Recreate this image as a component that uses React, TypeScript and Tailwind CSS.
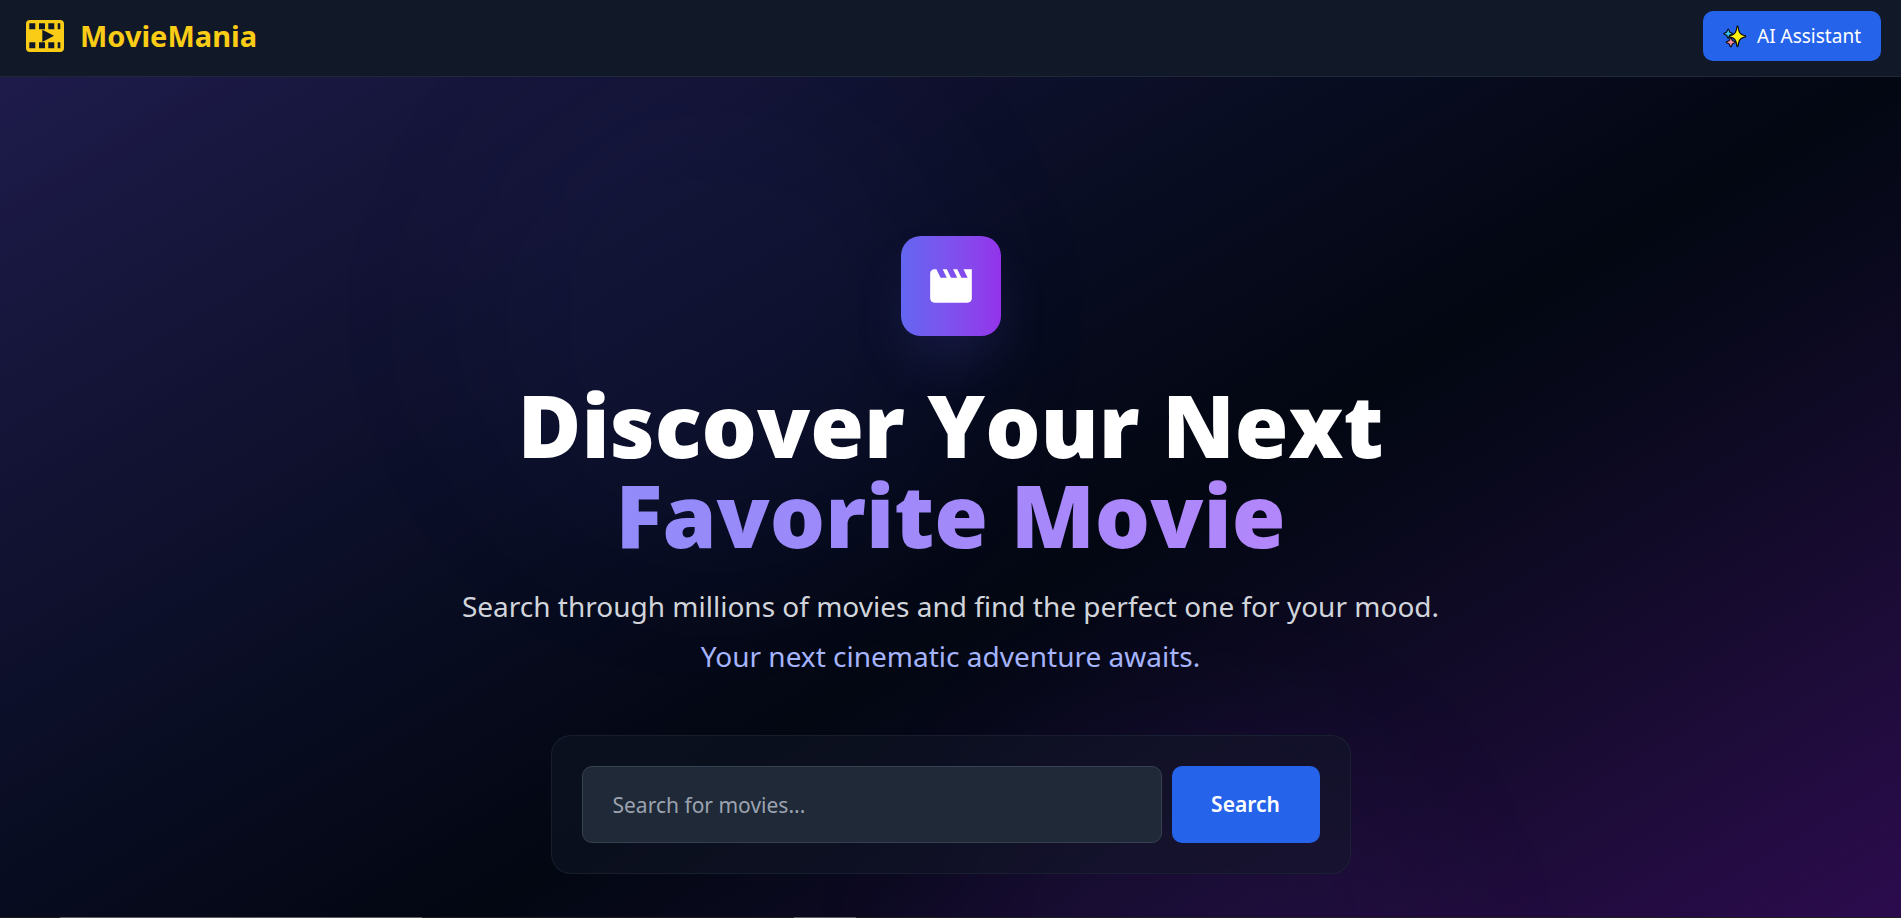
import { MdMovie } from "react-icons/md";

function FilmLogo() {
  return (
    <svg viewBox="0 0 38 32" className="h-8 w-[38px]" aria-hidden="true">
      <path
        fill="#facc15"
        fillRule="evenodd"
        d="M4 0h30a4 4 0 0 1 4 4v24a4 4 0 0 1-4 4H4a4 4 0 0 1-4-4V4a4 4 0 0 1 4-4zM3.300 3.300h6v6h-6zM13 3.300h6v6h-6zM22.300 3.300h6v6h-6zM31.700 3.300h2.600v6h-2.600zM3.300 22.200h6v6h-6zM13 22.200h6v6h-6zM22.300 22.200h6v6h-6zM31.700 22.200h2.600v6h-2.600zM16.300 9.700v12.200l11.700-6.100z"
      />
    </svg>
  );
}

function Sparkles() {
  return (
    <svg viewBox="0 0 24 24" className="size-6" aria-hidden="true" stroke="#0b0b0b" strokeWidth="2.200" strokeLinejoin="round" paintOrder="stroke">
      <path fill="#38c9f5" d="M5.200 5.800l1.100 2.800 2.700 1.100-2.700 1.100-1.100 2.800-1.100-2.800-2.700-1.100 2.700-1.100z" />
      <path fill="#f58ca0" d="M7.800 14.300l1.200 2.800 2.800 1.200-2.800 1.200-1.200 2.800-1.200-2.800-2.800-1.200 2.800-1.200z" />
      <path fill="#fdf010" d="M14.500 2.500c.7 6.300 2.200 8.600 7.800 9.800-5.600 1.200-7.100 3.500-7.800 9.800-.7-6.300-2.200-8.600-7.800-9.800 5.600-1.200 7.100-3.500 7.800-9.800z" />
    </svg>
  );
}

export default function App() {
  return (
    <div className="flex min-h-screen flex-col bg-[#030712] font-['Noto_Sans','Open_Sans',sans-serif] text-white">
      <header className="flex h-[77px] items-center justify-between border-b border-[#1f2937] bg-[#111827] pr-5 pb-1 pl-[26px]">
        <a href="#" className="flex items-center gap-4 text-[29px] leading-9 font-bold text-[#facc15]">
          <FilmLogo />
          MovieMania
        </a>
        <button className="flex h-[50px] items-center gap-2.5 rounded-[10px] bg-[#2563eb] px-5 text-[19px]">
          <Sparkles />
          AI Assistant
        </button>
      </header>

      <main className="relative isolate flex flex-1 flex-col items-center overflow-hidden bg-linear-to-br from-[#1e1b4b] via-[#030712] to-[#3b0764] bg-[length:100%_133%] bg-no-repeat px-5 pt-[159px] pb-10">
        <div className="absolute top-0 left-1/4 -z-10 size-[480px] rounded-full bg-[#4f46e5]/5 blur-[80px]" />
        <div className="absolute right-1/4 -bottom-[278px] -z-10 size-[480px] rounded-full bg-[#9333ea]/5 blur-[80px]" />

        <div className="flex size-[100px] items-center justify-center rounded-[20px] bg-linear-to-r from-[#6366f1] to-[#9333ea] shadow-[0_30px_60px_-12px_rgba(99,102,241,0.2)]">
          <MdMovie className="size-[50px]" />
        </div>
        <h1 className="mt-[43px] w-full max-w-[1280px] text-center font-['Open_Sans','Noto_Sans',sans-serif] text-[87px] leading-[90px] font-extrabold">
          Discover Your Next
          <span className="block bg-linear-to-r from-[#818cf8] to-[#c084fc] bg-clip-text text-transparent">Favorite Movie</span>
        </h1>
        <p className="mt-[22px] text-center text-[28px] leading-[50px] text-[#d1d5db]">
          Search through millions of movies and find the perfect one for your mood.
          <span className="block text-[#a5b4fc]">Your next cinematic adventure awaits.</span>
        </p>
        <form className="mt-[54px] flex w-full max-w-[800px] gap-2.5 rounded-[20px] border border-[#1f2937]/60 bg-[#111827]/50 p-[30px]">
          <input
            type="text"
            aria-label="Search for movies"
            placeholder="Search for movies..."
            className="h-[77px] min-w-0 flex-1 rounded-[10px] border border-[#374151] bg-[#1f2937] px-[30px] text-[21px] placeholder:text-[#9ca3af]"
          />
          <button type="button" className="w-[148px] rounded-[10px] bg-[#2563eb] text-[21px] font-semibold">
            Search
          </button>
        </form>
      </main>
      <footer className="flex h-px bg-[#1e1e1e] pl-[60px]">
        <div className="w-[362px] bg-[#5c5c5c]" />
        <div className="ml-[372px] w-[62px] bg-[#5c5c5c]" />
      </footer>
    </div>
  );
}
